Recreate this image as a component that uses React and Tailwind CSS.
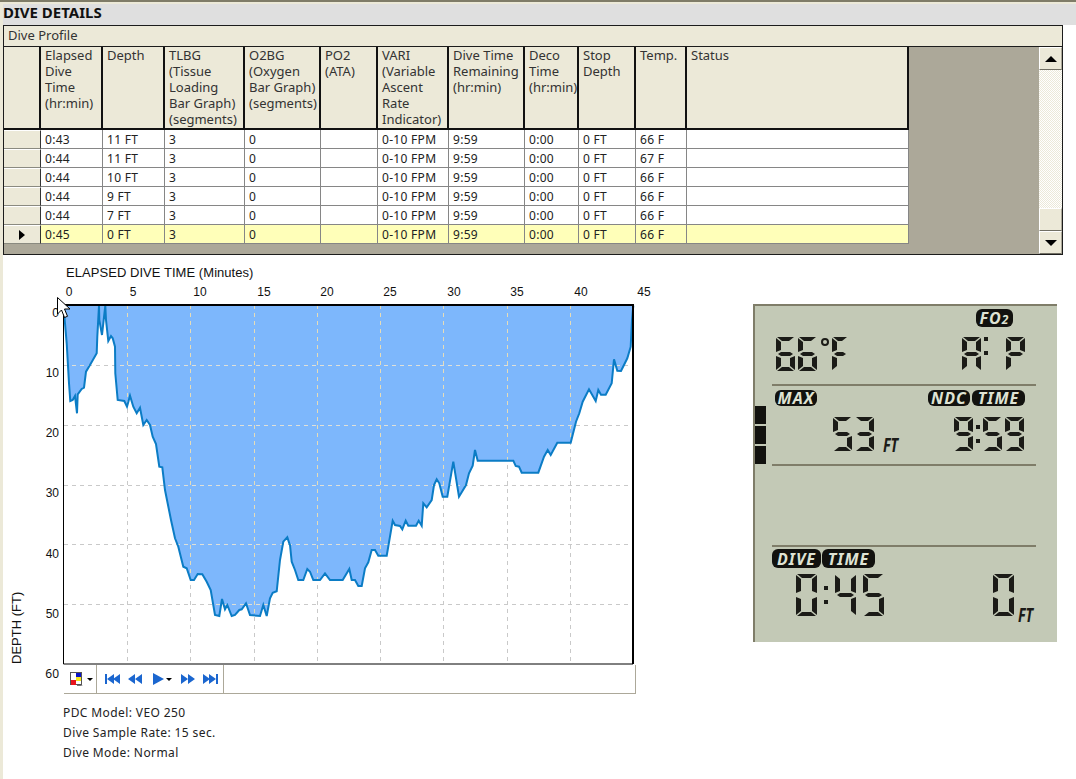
import React from 'react';

const columns = [
    ['Elapsed', 'Dive', 'Time', '(hr:min)'],
    ['Depth'],
    ['TLBG', '(Tissue', 'Loading', 'Bar Graph)', '(segments)'],
    ['O2BG', '(Oxygen', 'Bar Graph)', '(segments)'],
    ['PO2', '(ATA)'],
    ['VARI', '(Variable', 'Ascent', 'Rate', 'Indicator)'],
    ['Dive Time', 'Remaining', '(hr:min)'],
    ['Deco', 'Time', '(hr:min)'],
    ['Stop', 'Depth'],
    ['Temp.'],
    ['Status'],
];

const rows = [
    ['0:43', '11 FT', '3', '0', '', '0-10 FPM', '9:59', '0:00', '0 FT', '66 F', ''],
    ['0:44', '11 FT', '3', '0', '', '0-10 FPM', '9:59', '0:00', '0 FT', '67 F', ''],
    ['0:44', '10 FT', '3', '0', '', '0-10 FPM', '9:59', '0:00', '0 FT', '66 F', ''],
    ['0:44', '9 FT', '3', '0', '', '0-10 FPM', '9:59', '0:00', '0 FT', '66 F', ''],
    ['0:44', '7 FT', '3', '0', '', '0-10 FPM', '9:59', '0:00', '0 FT', '66 F', ''],
    ['0:45', '0 FT', '3', '0', '', '0-10 FPM', '9:59', '0:00', '0 FT', '66 F', ''],
];

const gridCols = 'grid grid-cols-[37px_62px_62px_80px_76px_57px_71px_76px_54px_57px_51px_222px]';

// traced off 3x crops of the chart, [x, y] inside each crop
const crop = (pts, ox, oy) => pts.map(([x, y]) => [ox + x / 3, oy + y / 3]);
const profile = [
    ...crop([[190, 135], [195, 190], [200, 250], [207, 370], [211, 423], [218, 420], [225, 408], [231, 460], [233, 403], [245, 387], [252, 383], [258, 335], [270, 315], [290, 280], [292, 230], [297, 137], [298, 180], [306, 225], [316, 137], [318, 180], [325, 243], [333, 228], [338, 235], [345, 260], [346, 340], [353, 420], [373, 423], [381, 440], [390, 407], [400, 440], [410, 460], [420, 443], [430, 495], [440, 480], [450, 495], [458, 530], [468, 552], [478, 620], [487, 622], [495, 690], [513, 780]], 0, 260),
    ...crop([[525, 55], [535, 80], [550, 140], [560, 145], [572, 180], [582, 180], [593, 162], [607, 163], [620, 185], [632, 210], [645, 285], [658, 288], [666, 237], [675, 268], [682, 255], [695, 288], [705, 285], [718, 270], [725, 268], [738, 250], [750, 285], [780, 288], [790, 255], [800, 288], [810, 235], [818, 218], [830, 214], [840, 120], [850, 65], [862, 52], [868, 70]], 0, 520),
    ...crop([[0, 135], [5, 185], [15, 210], [25, 240], [40, 240], [52, 207], [60, 215], [70, 240], [90, 240], [105, 220], [120, 240], [158, 240], [178, 207], [185, 240], [195, 240], [205, 258], [215, 258], [225, 205], [235, 187], [245, 150], [255, 150], [265, 167], [290, 167]], 290, 500),
    ...crop([[218, 692], [225, 705], [240, 708], [247, 718], [257, 692], [265, 707], [288, 707], [296, 692], [305, 707], [310, 640], [320, 652], [335, 630], [342, 585], [350, 568], [358, 580], [368, 620], [382, 620], [400, 515], [417, 620], [438, 585], [447, 550], [458, 527], [465, 480], [473, 512], [580, 512], [587, 528], [597, 530], [605, 548], [655, 548], [672, 500], [683, 480], [692, 495], [712, 458], [752, 458], [768, 395], [778, 370], [788, 335], [807, 298], [827, 333], [835, 300], [843, 314], [857, 314], [875, 280], [882, 208], [892, 242], [903, 243], [922, 205], [932, 170], [936, 90], [940, 47]], 320, 290),
];
const linePts = profile.map(([x, y]) => `${x.toFixed(1)},${y.toFixed(1)}`).join(' ');
const areaPts = `64,305 ${linePts} 633,305`;

const xGrid = [127.5, 190.5, 254.5, 317.5, 380.5, 443.5, 507.5, 570.5];
const yGrid = [365.5, 425.5, 485.5, 544.5, 604.5];
const xTicks = [[69, 0], [133, 5], [200, 10], [264, 15], [327, 20], [390, 25], [454, 30], [517, 35], [581, 40], [644, 45]];
const yTicks = [[317, 0], [377, 10], [437, 20], [497, 30], [558, 40], [618, 50]];

const Chart = () => (
    <svg viewBox="3 262 650 403" className="block w-[650px] h-[403px]">
        <defs>
            <clipPath id="area">
                <polygon points={areaPts} />
            </clipPath>
        </defs>
        <rect x="64" y="305" width="569" height="359" fill="#fff" />
        {xGrid.map((x) => <line key={x} x1={x} x2={x} y1="305" y2="664" stroke="#c9c9c9" strokeDasharray="4 4" />)}
        {yGrid.map((y) => <line key={y} y1={y} y2={y} x1="64" x2="633" stroke="#c9c9c9" strokeDasharray="4 4" />)}
        <polygon points={areaPts} fill="#7db7fc" />
        <g clipPath="url(#area)">
            {xGrid.map((x) => <line key={x} x1={x} x2={x} y1="305" y2="664" stroke="#e5dcb8" strokeDasharray="4 4" />)}
            {yGrid.map((y) => <line key={y} y1={y} y2={y} x1="64" x2="633" stroke="#dfe0d8" strokeDasharray="4 4" />)}
        </g>
        <polyline points={linePts} fill="none" stroke="#0b7cc5" strokeWidth="2" />
        <path d="M63.5 305V664H633" fill="none" stroke="#000" />
        <path d="M63 305H633V664" fill="none" stroke="#000" strokeWidth="2" />
        <g fontFamily="'Liberation Sans', Arial, sans-serif" fontSize="12" fill="#111">
            <text x="66" y="277" fontSize="13" letterSpacing=".05">ELAPSED DIVE TIME (Minutes)</text>
            {xTicks.map(([x, t]) => <text key={t} x={x} y="296" textAnchor="middle">{t}</text>)}
            {yTicks.map(([y, t]) => <text key={t} x="59" y={y} textAnchor="end">{t}</text>)}
            <text transform="translate(21 664) rotate(-90)" fontSize="13">DEPTH (FT)</text>
        </g>
    </svg>
);

const Cursor = () => (
    <svg viewBox="0 0 13 22" className="absolute left-[57px] top-[297px] w-[13px] h-[22px]">
        <path d="M.5.5V17l4-4 3 7.5 3-1.2-3-7.3h5.5z" fill="#fff" stroke="#000" />
    </svg>
);

const NavIcon = ({ d }) => (
    <svg viewBox="0 0 16 12" className="w-[16px] h-[12px]">
        <path d={d} fill="#1b66cf" />
    </svg>
);

const Caret = () => (
    <svg viewBox="0 0 6 3" className="w-[6px] h-[3px]">
        <path d="M0 0h6L3 3z" fill="#000" />
    </svg>
);

const Toolbar = () => (
    <div className="flex items-center h-[29px] w-[572px] border-b border-[#aca899] bg-white">
        <div className="flex items-center h-full w-[33px] pl-[6px] gap-[3px] border-r border-[#aca899]">
            <svg viewBox="0 0 14 14" className="w-[14px] h-[14px] shrink-0">
                <rect x=".5" y=".5" width="11" height="12" fill="#fff" stroke="#555" />
                <rect x="6" y="1" width="5" height="4" fill="#0a14c8" />
                <rect x="6" y="5" width="5" height="4" fill="#f6e81c" />
                <rect x="1" y="8" width="5" height="5" fill="#e8141c" />
                <path d="M7 13h6l-2 1H7z" fill="#777" />
            </svg>
            <Caret />
        </div>
        <div className="flex items-center h-full w-[127px] pl-[8px] border-r border-[#aca899]">
            <NavIcon d="M0 1h2v10H0zM2 6l7-5v10zM8 6l7-5v10z" />
            <span className="ml-[7px]"><NavIcon d="M0 6l7-5v10zM7 6l7-5v10z" /></span>
            <span className="ml-[9px] flex items-center gap-[2px]">
                <svg viewBox="0 0 11 12" className="w-[11px] h-[12px]"><path d="M0 0l11 6-11 6z" fill="#1b66cf" /></svg>
                <Caret />
            </span>
            <span className="ml-[8px]"><NavIcon d="M1 1l7 5-7 5zM8 1l7 5-7 5z" /></span>
            <span className="ml-[7px]"><NavIcon d="M0 1l7 5-7 5zM6 1l7 5-7 5zM13 1h2v10h-2z" /></span>
        </div>
        <div className="flex-1 h-full border-r border-[#aca899]" />
    </div>
);

const SEGMENTS = {
    0: 'abcdef', 3: 'abcdg', 4: 'bcfg', 5: 'acdfg', 6: 'acdefg', 9: 'abcdfg',
    A: 'abcefg', P: 'abefg', F: 'aefg',
};

// LCD digit built from CSS shapes, the side bars run into the corners with a mitre
const Digit = ({ char, size = 'w-[19px] h-[34px]' }) => {
    const on = SEGMENTS[char];
    const seg = (name, cls) => (
        <div className={`${cls} ${on.includes(name) ? 'bg-[#1b1b17]' : 'bg-transparent'}`} />
    );
    return (
        <div className={`grid grid-cols-[5px_1fr_5px] grid-rows-[4px_1fr_4px_1fr_4px] ${size}`}>
            {seg('a', 'col-start-1 col-span-3 row-start-1 [clip-path:polygon(1px_0,calc(100%-1px)_0,calc(100%-6px)_100%,6px_100%)]')}
            {seg('f', 'col-start-1 row-start-1 row-span-2 [clip-path:polygon(0_1px,100%_5px,100%_calc(100%-2px),0_100%)]')}
            {seg('b', 'col-start-3 row-start-1 row-span-2 [clip-path:polygon(0_5px,100%_1px,100%_100%,0_calc(100%-2px))]')}
            {seg('g', 'col-start-1 col-span-3 row-start-3 [clip-path:polygon(5px_0,calc(100%-5px)_0,calc(100%-2px)_50%,calc(100%-5px)_100%,5px_100%,2px_50%)]')}
            {seg('e', 'col-start-1 row-start-4 row-span-2 [clip-path:polygon(0_0,100%_2px,100%_calc(100%-5px),0_calc(100%-1px))]')}
            {seg('c', 'col-start-3 row-start-4 row-span-2 [clip-path:polygon(0_2px,100%_0,100%_calc(100%-1px),0_calc(100%-5px))]')}
            {seg('d', 'col-start-1 col-span-3 row-start-5 [clip-path:polygon(6px_0,calc(100%-6px)_0,calc(100%-1px)_100%,1px_100%)]')}
        </div>
    );
};

const BIG = 'w-[21px] h-[42px]';

const Colon = () => (
    <div className="flex flex-col justify-center gap-[10px] w-[4px]">
        <div className="w-[4px] h-[4px] bg-[#1b1b17]" />
        <div className="w-[4px] h-[4px] bg-[#1b1b17]" />
    </div>
);

const Badge = ({ children, className = '' }) => (
    <div className={`flex items-center justify-center bg-[#12120f] text-[#dfe3d4] font-bold italic rounded-[6px] text-[16px] leading-none tracking-[1px] ${className}`}>
        {children}
    </div>
);

const Unit = ({ className = '' }) => (
    <span className={`block w-[18px] italic font-bold text-[#1b1b17] text-[19px] leading-none tracking-normal origin-left scale-x-[.75] ${className}`}>FT</span>
);

const Divider = () => <div className="h-[2px] bg-[#7f7d69]" />;

const Lcd = () => (
    <div className="relative w-[304px] h-[338px] ml-[100px] mt-[42px] pl-[17px] pr-[21px] bg-[#c3c9b6] border-t-2 border-l-2 border-[#7f7d69]">
        <div className="absolute left-0 top-[100px] flex flex-col gap-[2px]">
            <div className="w-[11px] h-[18px] bg-[#12120f]" />
            <div className="w-[11px] h-[18px] bg-[#12120f]" />
            <div className="w-[11px] h-[18px] bg-[#12120f]" />
        </div>

        <div className="h-[78px] pt-[3px]">
            <div className="flex justify-end pr-[23px]">
                <Badge className="w-[37px] h-[18px]">FO<span className="text-[12px] mt-[3px]">2</span></Badge>
            </div>
            <div className="flex justify-between mt-[10px] pl-[4px] pr-[11px]">
                <div role="img" aria-label="66°F" className="flex gap-[3px]">
                    <Digit char="6" />
                    <Digit char="6" />
                    <div className="w-[8px] h-[8px] ml-[1px] mt-[1px] rounded-full border-2 border-[#1b1b17]" />
                    <Digit char="F" size="w-[16px] h-[34px]" />
                </div>
                <div role="img" aria-label="A: P" className="flex">
                    <Digit char="A" />
                    <div className="ml-[3px]"><Colon /></div>
                    <div className="ml-[18px]"><Digit char="P" /></div>
                </div>
            </div>
        </div>
        <Divider />

        <div className="h-[78px] pt-[4px]">
            <div className="flex justify-between pl-[3px] pr-[11px]">
                <Badge className="w-[42px] h-[16px]">MAX</Badge>
                <div className="flex gap-[2px]">
                    <Badge className="w-[42px] h-[16px]">NDC</Badge>
                    <Badge className="w-[53px] h-[16px]">TIME</Badge>
                </div>
            </div>
            <div className="flex mt-[11px] pl-[61px] pr-[12px]">
                <div role="img" aria-label="53" className="flex gap-[3px]">
                    <Digit char="5" />
                    <Digit char="3" />
                </div>
                <Unit className="self-end ml-[9px] -mb-[4px]" />
                <div role="img" aria-label="9:59" className="flex gap-[3px] ml-auto">
                    <Digit char="9" />
                    <Colon />
                    <Digit char="5" />
                    <Digit char="9" />
                </div>
            </div>
        </div>
        <Divider />

        <div className="h-[79px]" />
        <Divider />

        <div className="pt-[2px]">
            <div className="flex gap-[1px]">
                <Badge className="w-[49px] h-[19px]">DIVE</Badge>
                <Badge className="w-[53px] h-[19px]">TIME</Badge>
            </div>
            <div className="flex mt-[6px] pl-[24px]">
                <div role="img" aria-label="0:45" className="flex gap-[7px]">
                    <Digit char="0" size={BIG} />
                    <Colon />
                    <Digit char="4" size={BIG} />
                    <Digit char="5" size={BIG} />
                </div>
                <div role="img" aria-label="0" className="ml-auto"><Digit char="0" size={BIG} /></div>
                <Unit className="self-end ml-[4px] -mb-[9px]" />
            </div>
        </div>
    </div>
);

const Scrollbar = () => {
    const btn = 'flex items-center justify-center bg-[#ece9d8] border border-t-white border-l-white border-r-[#aca899] border-b-[#716f64]';
    return (
        <div className="flex flex-col w-[23px] bg-[#aca899]">
            <div className={`h-[23px] ${btn}`}>
                <svg viewBox="0 0 12 6" className="w-[12px] h-[6px]"><path d="M6 0l6 6H0z" fill="#000" /></svg>
            </div>
            <div className="h-[138px] bg-[repeating-conic-gradient(#ece9d8_0_25%,#fff_0_50%)] bg-[length:2px_2px]" />
            <div className={`h-[23px] ${btn}`} />
            <div className={`h-[23px] ${btn}`}>
                <svg viewBox="0 0 12 6" className="w-[12px] h-[6px]"><path d="M0 0h12L6 6z" fill="#000" /></svg>
            </div>
        </div>
    );
};

const DiveTable = () => (
    <div className="w-[1060px] bg-[#aca899] border border-[#1c1c1c] text-[13px]">
        <div className="h-[21px] px-[4px] leading-[18px] bg-[#ece9d8] text-[#333] border-b border-[#1c1c1c]">Dive Profile</div>
        <div className="flex justify-between">
            <div>
                <div className={gridCols}>
                    <div className="h-[83px] bg-[#ece9d8] border-r-2 border-b-2 border-[#111]" />
                    {columns.map((lines, i) => (
                        <div key={i} className="h-[83px] pl-[4px] leading-[16px] whitespace-nowrap overflow-hidden bg-[#ece9d8] text-[#333] border-r-2 border-b-2 border-[#111]">
                            {lines.map((line) => <div key={line}>{line}</div>)}
                        </div>
                    ))}
                </div>
                {rows.map((row, r) => {
                    const current = r === rows.length - 1;
                    return (
                        <div key={r} className={gridCols}>
                            <div className="flex items-center justify-center h-[19px] bg-[#ece9d8] border-t border-t-white border-r border-r-[#333] border-b border-b-[#8a8a80]">
                                {current && (
                                    <svg viewBox="0 0 6 10" className="w-[6px] h-[10px]"><path d="M0 0l6 5-6 5z" fill="#000" /></svg>
                                )}
                            </div>
                            {row.map((cell, c) => (
                                <div key={c} className={`h-[19px] pl-[4px] text-[12px] tracking-[.3px] leading-[19px] whitespace-nowrap text-[#222] border-r border-b border-[#868686] ${current ? 'bg-[#ffffb9]' : 'bg-white'}`}>
                                    {cell}
                                </div>
                            ))}
                        </div>
                    );
                })}
            </div>
            <Scrollbar />
        </div>
    </div>
);

export default function App() {
    return (
        <div className="relative flex w-[1076px] h-[779px] overflow-hidden bg-white font-['Liberation_Sans',Arial,sans-serif] text-[12px]">
            <div className="w-[3px] bg-[#ece9d8]" />
            <div className="flex-1 min-w-0">
                <div className="h-[4px] bg-[#ece9d8] border-t-2 border-[#7f7c68] -ml-[3px]" />
                <div className="h-[21px] bg-[#dfdfdf] font-bold text-[15px] leading-[16px] text-[#111]">DIVE DETAILS</div>
                <DiveTable />
                <div className="flex mt-[7px]">
                    <div className="w-[650px]">
                        <Chart />
                        <div className="flex items-start">
                            <div className="w-[56px] text-right pt-[2px] leading-[14px] text-[#111]">60</div>
                            <div className="ml-[5px]"><Toolbar /></div>
                        </div>
                        <div className="mt-[9px] pl-[60px] text-[#222] leading-[20px] tracking-[.4px]">
                            <div>PDC Model: VEO 250</div>
                            <div>Dive Sample Rate: 15 sec.</div>
                            <div>Dive Mode: Normal</div>
                        </div>
                    </div>
                    <Lcd />
                </div>
            </div>
            <Cursor />
        </div>
    );
}
